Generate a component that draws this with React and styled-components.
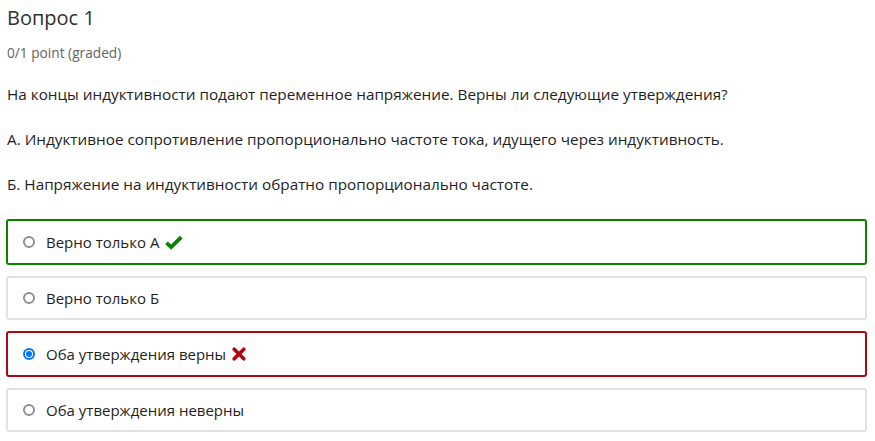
import React from "react";
import styled, { createGlobalStyle } from "styled-components";

const GlobalStyle = createGlobalStyle`
  body {
    margin: 0;
    background: #fff;
    font-family: "Open Sans", "Liberation Sans", sans-serif;
    color: #313131;
  }
`;

const Page = styled.div`
  padding: 0 8px 0 6px;
`;

const Title = styled.h3`
  margin: 0;
  padding: 4px 0 0 1px;
  font-size: 20px;
  font-weight: 400;
  line-height: 28px;
  color: #313131;
`;

const Points = styled.div`
  margin-top: 12px;
  padding-left: 1px;
  font-size: 13.7px;
  line-height: 18px;
  color: #646464;
`;

const Text = styled.p`
  margin: 0;
  margin-top: ${(p) => p.$top}px;
  padding-left: 1px;
  font-size: 15.3px;
  line-height: 20px;
  color: #1e1e1e;
`;

const Choices = styled.div`
  margin-top: 25px;
  display: flex;
  flex-direction: column;
  gap: 11px;
`;

const borderColors = {
  correct: "#0d8000",
  incorrect: "#b20610",
  none: "#e2e2e2",
};

const Choice = styled.label`
  display: flex;
  align-items: center;
  height: ${(p) => (p.$status === "none" ? 44 : 46)}px;
  box-sizing: border-box;
  border: 2px solid ${(p) => borderColors[p.$status]};
  border-radius: 3px;
  padding-left: 15px;
  font-size: 15px;
  color: #1e1e1e;
`;

const Radio = styled.span`
  width: 12px;
  height: 12px;
  box-sizing: border-box;
  border-radius: 50%;
  border: 2px solid ${(p) => (p.$checked ? "#0075ff" : "#8f8f9d")};
  margin-right: 11px;
  display: flex;
  align-items: center;
  justify-content: center;
  &::after {
    content: "";
    display: ${(p) => (p.$checked ? "block" : "none")};
    width: 6px;
    height: 6px;
    border-radius: 50%;
    background: #0075ff;
  }
`;

const Mark = styled.svg`
  margin-left: 6px;
`;

const Check = () => (
  <Mark width="18" height="15" viewBox="0 0 18 15">
    <path d="M1.5 7.8 L6.2 12.2 L16.2 2.2" fill="none" stroke="#0d8000" strokeWidth="3.8" strokeLinejoin="miter" />
  </Mark>
);

const Cross = () => (
  <Mark width="14" height="14" viewBox="0 0 14 14">
    <path d="M2.2 2.2 L11.8 11.8 M11.8 2.2 L2.2 11.8" fill="none" stroke="#b20610" strokeWidth="3.6" strokeLinecap="round" />
  </Mark>
);

const options = [
  { text: "Верно только А", status: "correct", mark: "check" },
  { text: "Верно только Б", status: "none" },
  { text: "Оба утверждения верны", status: "incorrect", checked: true, mark: "cross" },
  { text: "Оба утверждения неверны", status: "none" },
];

const App = () => (
  <Page>
    <GlobalStyle />
    <Title>Вопрос 1</Title>
    <Points>0/1 point (graded)</Points>
    <Text $top={22}>
      На концы индуктивности подают переменное напряжение. Верны ли следующие утверждения?
    </Text>
    <Text $top={25}>
      А. Индуктивное сопротивление пропорционально частоте тока, идущего через индуктивность.
    </Text>
    <Text $top={25}>Б. Напряжение на индуктивности обратно пропорционально частоте.</Text>
    <Choices>
      {options.map((o) => (
        <Choice key={o.text} $status={o.status}>
          <Radio $checked={o.checked} />
          {o.text}
          {o.mark === "check" && <Check />}
          {o.mark === "cross" && <Cross />}
        </Choice>
      ))}
    </Choices>
  </Page>
);

export default App;
